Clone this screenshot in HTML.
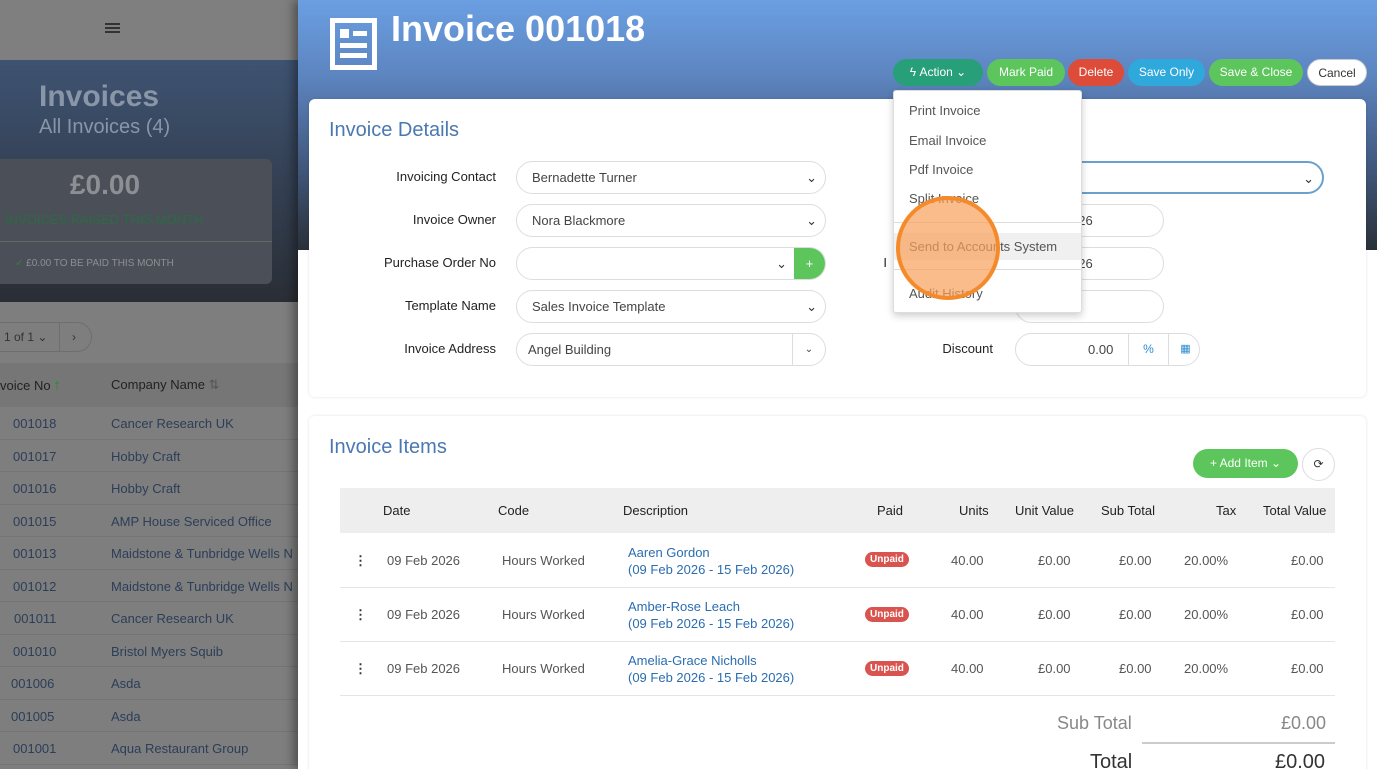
<!DOCTYPE html>
<html><head><meta charset="utf-8"><style>
*{box-sizing:border-box;margin:0;padding:0}
body{width:1377px;height:769px;overflow:hidden;font-family:"Liberation Sans",sans-serif;position:relative;background:#fff}
.abs{position:absolute}
#left{left:0;top:0;width:298px;height:769px;background:#7e7e7e;overflow:hidden}
#topbar{left:0;top:0;width:298px;height:60px;background:#7f7f7f}
#hero{left:0;top:60px;width:298px;height:242px;background:linear-gradient(#3e5372,#2a2e35)}
.lrow{position:absolute;left:0;width:298px;height:32.5px;border-bottom:1px solid #747474;font-size:13px;color:#2c3e58}
.lrow span{position:absolute;top:9px}
#panel{left:298px;top:0;width:1079px;height:769px;background:#fff;box-shadow:-4px 0 10px rgba(0,0,0,.4);overflow:hidden}
#phead{left:0;top:0;width:1079px;height:250px;background:linear-gradient(180deg,#6a9fe2 0%,#5d85c0 30%,#46608a 60%,#2a3038 100%)}
.card{position:absolute;background:#fff;border-radius:6px;box-shadow:0 0 3px rgba(0,0,0,.12)}
.btn{position:absolute;top:59px;height:27px;border-radius:14px;color:#fff;font-size:12px;line-height:27px;text-align:center}
.lbl{position:absolute;font-size:13px;color:#222;text-align:right;width:200px}
.inp{position:absolute;height:33px;border:1px solid #ddd;border-radius:17px;font-size:13px;color:#444;line-height:31px;padding-left:15px;background:#fff}
.chev{position:absolute;right:8px;top:0;font-size:13px;color:#333}
.th{position:absolute;top:503px;font-size:13px;color:#222}
.td{position:absolute;font-size:13px;color:#555}
.blue{color:#2a6db0}
.badge{position:absolute;background:#d9534f;color:#fff;font-size:10px;font-weight:bold;border-radius:8px;padding:2px 5px}
.dd{position:absolute;font-size:13px;color:#555;left:15px}
</style></head><body>
<div id="left" class="abs">
 <div id="topbar" class="abs"><div class="abs" style="left:105px;top:23px;width:15px;height:2px;background:#333;box-shadow:0 4px 0 #333,0 8px 0 #333"></div></div>
 <div id="hero" class="abs">
  <div class="abs" style="left:39px;top:20px;font-size:30px;color:#8a96a8;font-weight:bold">Invoices</div>
  <div class="abs" style="left:39px;top:56px;font-size:20px;color:#8a96a8">All Invoices (4)</div>
  <div class="abs" style="left:0;top:99px;width:272px;height:125px;background:#4b5058;border-radius:0 6px 6px 0">
   <div class="abs" style="left:0;width:210px;top:10px;text-align:center;font-size:28px;color:#8c8f94;font-weight:bold">£0.00</div>
   <div class="abs" style="left:5px;top:53px;font-size:13px;color:#2b6a45">INVOICES RAISED THIS MONTH</div>
   <div class="abs" style="left:0;top:82px;width:272px;height:1px;background:#666"></div>
   <div class="abs" style="left:15px;top:99px;font-size:10px;color:#8c8f94"><span style="color:#3a7a48">✓</span> £0.00 TO BE PAID THIS MONTH</div>
  </div>
 </div>
 <div class="abs" style="left:-20px;top:322px;width:112px;height:30px;border:1px solid #6e6e6e;border-radius:15px;font-size:12px;color:#333;line-height:28px;padding-left:23px">1 of 1 ⌄ <span style="position:absolute;left:78px;top:0;height:28px;border-left:1px solid #6e6e6e;padding-left:12px">›</span></div>
 <div class="abs" style="left:0;top:363px;width:298px;height:44px;background:#767676;font-size:13px;color:#222">
  <span class="abs" style="left:0;top:14px">voice No <span style="color:#3c8a3c">🠕</span></span>
  <span class="abs" style="left:111px;top:14px">Company Name <span style="color:#555">⇅</span></span></div>
 <div class="lrow" style="top:407px"><span style="left:13px">001018</span><span style="left:111px">Cancer Research UK</span></div>
 <div class="lrow" style="top:439.5px"><span style="left:13px">001017</span><span style="left:111px">Hobby Craft</span></div>
 <div class="lrow" style="top:472px"><span style="left:13px">001016</span><span style="left:111px">Hobby Craft</span></div>
 <div class="lrow" style="top:504.5px"><span style="left:13px">001015</span><span style="left:111px">AMP House Serviced Office</span></div>
 <div class="lrow" style="top:537px"><span style="left:13px">001013</span><span style="left:111px;white-space:nowrap">Maidstone &amp; Tunbridge Wells N</span></div>
 <div class="lrow" style="top:569.5px"><span style="left:13px">001012</span><span style="left:111px;white-space:nowrap">Maidstone &amp; Tunbridge Wells N</span></div>
 <div class="lrow" style="top:602px"><span style="left:14px">001011</span><span style="left:111px">Cancer Research UK</span></div>
 <div class="lrow" style="top:634.5px"><span style="left:13px">001010</span><span style="left:111px">Bristol Myers Squib</span></div>
 <div class="lrow" style="top:667px"><span style="left:11px">001006</span><span style="left:111px">Asda</span></div>
 <div class="lrow" style="top:699.5px"><span style="left:11px">001005</span><span style="left:111px">Asda</span></div>
 <div class="lrow" style="top:732px"><span style="left:13px">001001</span><span style="left:111px">Aqua Restaurant Group</span></div>
</div>

<div id="panel" class="abs">
 <div id="phead" class="abs"></div>
 <svg class="abs" style="left:32px;top:18px" width="48" height="52" viewBox="0 0 48 52"><rect x="2.5" y="2.5" width="42" height="47" fill="none" stroke="#fff" stroke-width="5"/><rect x="10" y="11" width="9" height="9" fill="#fff"/><rect x="23" y="13" width="14" height="5" fill="#fff"/><rect x="10" y="25" width="27" height="5" fill="#fff"/><rect x="10" y="35" width="27" height="5" fill="#fff"/></svg>
 <div class="abs" style="left:93px;top:8px;font-size:36px;color:#fff;font-weight:bold">Invoice 001018</div>
 <div class="btn" style="left:595px;width:90px;background:#27a07a">ϟ Action ⌄</div>
 <div class="btn" style="left:689px;width:78px;background:#5cc65c">Mark Paid</div>
 <div class="btn" style="left:770px;width:56px;background:#dd4b39">Delete</div>
 <div class="btn" style="left:830px;width:77px;background:#2fa8dc">Save Only</div>
 <div class="btn" style="left:911px;width:94px;background:#5cc65c">Save &amp; Close</div>
 <div class="btn" style="left:1009px;width:60px;background:#fff;color:#333;border:1px solid #ccc">Cancel</div>

 <div class="card" style="left:11px;top:99px;width:1057px;height:298px">
  <div class="abs" style="left:20px;top:20px;font-size:20px;color:#4a78b0">Invoice Details</div>
  <div class="lbl" style="left:-13px;top:70px">Invoicing Contact</div>
  <div class="lbl" style="left:-13px;top:113px">Invoice Owner</div>
  <div class="lbl" style="left:-13px;top:156px">Purchase Order No</div>
  <div class="lbl" style="left:-13px;top:199px">Template Name</div>
  <div class="lbl" style="left:-13px;top:242px">Invoice Address</div>
  <div class="inp" style="left:207px;top:62px;width:310px">Bernadette Turner<span class="chev">⌄</span></div>
  <div class="inp" style="left:207px;top:105px;width:310px">Nora Blackmore<span class="chev">⌄</span></div>
  <div class="inp" style="left:207px;top:148px;width:310px;overflow:hidden"><span class="chev" style="right:38px">⌄</span><span class="abs" style="right:0;top:0;width:31px;height:33px;background:#5cc65c;color:#fff;text-align:center">+</span></div>
  <div class="inp" style="left:207px;top:191px;width:310px">Sales Invoice Template<span class="chev">⌄</span></div>
  <div class="inp" style="left:207px;top:234px;width:310px;padding-left:11px">Angel Building<span class="abs" style="right:0;top:0;width:33px;height:31px;border-left:1px solid #ddd;text-align:center;font-size:10px">⌄</span></div>
  <div class="inp" style="left:720px;top:62px;width:295px;border:2px solid #6aa0cc"><span class="chev">⌄</span></div>
  <div class="inp" style="left:706px;top:105px;width:149px;padding-left:55px">026</div>
  <div class="lbl" style="left:378px;top:156px;width:200px">I</div>
  <div class="inp" style="left:706px;top:148px;width:149px;padding-left:55px">026</div>
  <div class="inp" style="left:706px;top:191px;width:149px"></div>
  <div class="lbl" style="left:484px;top:242px">Discount</div>
  <div class="inp" style="left:706px;top:234px;width:185px;overflow:hidden"><span class="abs" style="left:72px;top:0">0.00</span><span class="abs" style="left:112px;top:0;width:40px;height:31px;border-left:1px solid #ddd;text-align:center;color:#2a8ad0;font-size:12px">%</span><span class="abs" style="left:152px;top:0;width:34px;height:31px;border-left:1px solid #ddd;text-align:center;color:#2a8ad0;font-size:11px">▦</span></div>
 </div>

 <div class="card" style="left:11px;top:416px;width:1057px;height:360px">
  <div class="abs" style="left:20px;top:20px;font-size:20px;color:#4a78b0">Invoice Items</div>
  <div class="abs" style="left:884px;top:33px;width:105px;height:29px;border-radius:15px;background:#5cc65c;color:#fff;font-size:12px;line-height:29px;text-align:center">+ Add Item ⌄</div>
  <div class="abs" style="left:993px;top:32px;width:33px;height:33px;border-radius:50%;border:1px solid #ddd;text-align:center;line-height:31px;font-size:12px;color:#333">⟳</div>
  <div class="abs" style="left:31px;top:72px;width:995px;height:45px;background:#eee"></div>
  <div class="abs" style="left:31px;top:171px;width:995px;height:1px;background:#e5e5e5"></div>
  <div class="abs" style="left:31px;top:225px;width:995px;height:1px;background:#e5e5e5"></div>
  <div class="abs" style="left:31px;top:279px;width:995px;height:1px;background:#e5e5e5"></div>
  <div class="abs" style="left:833px;top:326px;width:193px;height:2px;background:#ccc"></div>
  <div class="abs" style="left:748px;top:297px;font-size:18px;color:#888">Sub Total</div>
  <div class="abs" style="left:972px;top:297px;font-size:18px;color:#888">£0.00</div>
  <div class="abs" style="left:781px;top:335px;font-size:20px;color:#333">Total</div>
  <div class="abs" style="left:966px;top:335px;font-size:20px;color:#333">£0.00</div>
 </div>
 <div class="th" style="left:85px">Date</div><div class="th" style="left:200px">Code</div><div class="th" style="left:325px">Description</div><div class="th" style="left:579px">Paid</div><div class="th" style="left:661px">Units</div><div class="th" style="left:717px">Unit Value</div><div class="th" style="left:803px">Sub Total</div><div class="th" style="left:918px">Tax</div><div class="th" style="left:965px">Total Value</div>

 <div class="td" style="left:56px;top:553px;color:#333;font-weight:bold">⋮</div><div class="td" style="left:89px;top:553px">09 Feb 2026</div><div class="td" style="left:204px;top:553px">Hours Worked</div><div class="td blue" style="left:330px;top:544px;line-height:17px">Aaren Gordon<br>(09 Feb 2026 - 15 Feb 2026)</div><div class="badge" style="left:567px;top:552px">Unpaid</div><div class="td" style="left:653px;top:553px">40.00</div><div class="td" style="left:740px;top:553px">£0.00</div><div class="td" style="left:821px;top:553px">£0.00</div><div class="td" style="left:886px;top:553px">20.00%</div><div class="td" style="left:993px;top:553px">£0.00</div>
 <div class="td" style="left:56px;top:607px;color:#333;font-weight:bold">⋮</div><div class="td" style="left:89px;top:607px">09 Feb 2026</div><div class="td" style="left:204px;top:607px">Hours Worked</div><div class="td blue" style="left:330px;top:598px;line-height:17px">Amber-Rose Leach<br>(09 Feb 2026 - 15 Feb 2026)</div><div class="badge" style="left:567px;top:607px">Unpaid</div><div class="td" style="left:653px;top:607px">40.00</div><div class="td" style="left:740px;top:607px">£0.00</div><div class="td" style="left:821px;top:607px">£0.00</div><div class="td" style="left:886px;top:607px">20.00%</div><div class="td" style="left:993px;top:607px">£0.00</div>
 <div class="td" style="left:56px;top:661px;color:#333;font-weight:bold">⋮</div><div class="td" style="left:89px;top:661px">09 Feb 2026</div><div class="td" style="left:204px;top:661px">Hours Worked</div><div class="td blue" style="left:330px;top:652px;line-height:17px">Amelia-Grace Nicholls<br>(09 Feb 2026 - 15 Feb 2026)</div><div class="badge" style="left:567px;top:661px">Unpaid</div><div class="td" style="left:653px;top:661px">40.00</div><div class="td" style="left:740px;top:661px">£0.00</div><div class="td" style="left:821px;top:661px">£0.00</div><div class="td" style="left:886px;top:661px">20.00%</div><div class="td" style="left:993px;top:661px">£0.00</div>

 <div class="abs" style="left:595px;top:90px;width:189px;height:223px;background:#fff;border:1px solid #ddd;border-radius:3px;box-shadow:0 3px 8px rgba(0,0,0,.2)">
  <div class="dd" style="top:12px">Print Invoice</div>
  <div class="dd" style="top:42px">Email Invoice</div>
  <div class="dd" style="top:71px">Pdf Invoice</div>
  <div class="dd" style="top:100px">Split Invoice</div>
  <div class="abs" style="left:0;top:131px;width:187px;height:1px;background:#ddd"></div>
  <div class="abs" style="left:0;top:142px;width:187px;height:27px;background:#f0f0f0"></div>
  <div class="dd" style="top:148px">Send to Accounts System</div>
  <div class="abs" style="left:0;top:178px;width:187px;height:1px;background:#ddd"></div>
  <div class="dd" style="top:195px">Audit History</div>
 </div>
 <div class="abs" style="left:598px;top:196px;width:104px;height:104px;border-radius:50%;background:rgba(250,160,90,.7);border:4px solid #f58a2a"></div>
</div>
</body></html>
